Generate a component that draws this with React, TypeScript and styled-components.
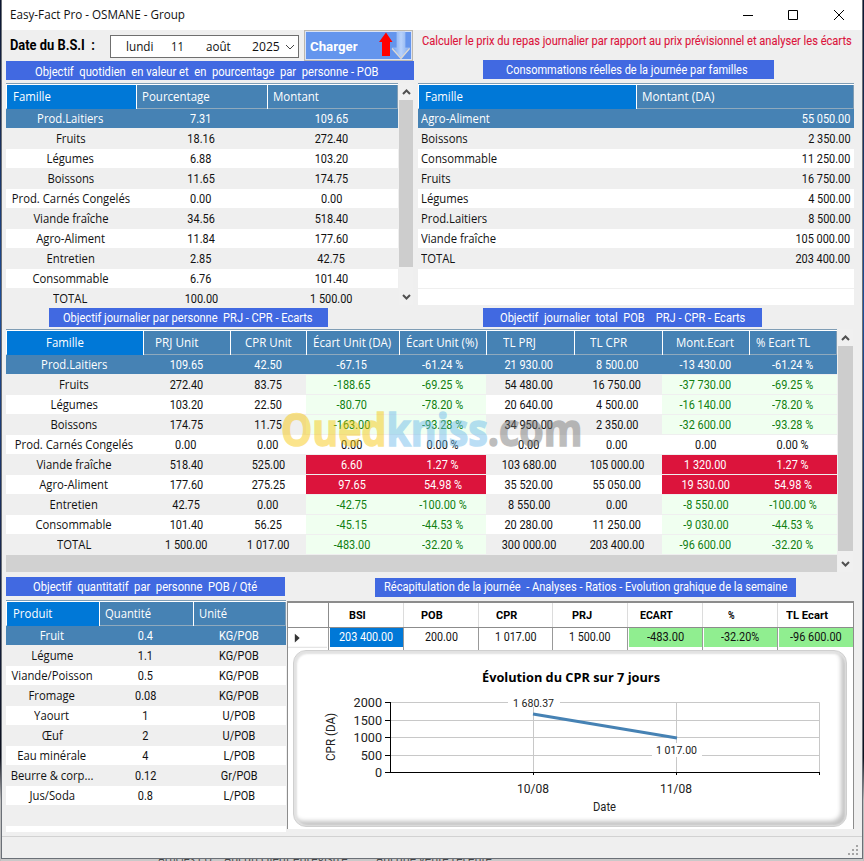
import React, { useLayoutEffect, useRef, useState } from 'react';
import styled, { createGlobalStyle, css } from 'styled-components';

const UI = '"Open Sans", "Noto Sans", sans-serif';
const NUM = 'Roboto, "Liberation Sans", sans-serif';

const GlobalStyle = createGlobalStyle`
  * { box-sizing: border-box; }
  body { margin: 0; background: #cfcfcf; overflow: hidden; font: 12px/18px ${UI}; color: #111; }
`;

/* ---------- text that is squeezed to a given width ---------- */

const FitBox = styled.span<{ $w: number }>`
  display: block;
  flex: none;
  width: ${p => p.$w}px;
  white-space: pre;
  text-align: left;
`;
const FitText = styled.span`
  display: inline-block;
  transform-origin: 0 50%;
`;

function Fit({ w, children }: { w: number; children: React.ReactNode }) {
  const ref = useRef<HTMLSpanElement>(null);
  const [scale, setScale] = useState(1);
  useLayoutEffect(() => {
    if (ref.current) setScale(w / ref.current.offsetWidth);
  }, [w]);
  return (
    <FitBox $w={w}>
      <FitText ref={ref} style={{ transform: `scaleX(${scale})` }}>{children}</FitText>
    </FitBox>
  );
}

/* ---------- window frame ---------- */

const Desktop = styled.div`
  width: 864px;
  height: 861px;
  padding: 0 1px 0 1px;
  background: linear-gradient(#0b1530, #18294f 12%, #1d4f9c 36%, #1a2c58 60%, #0b0f1c 88%, #bdbdbd 93%);
  overflow: hidden;
`;
const Window = styled.div`
  position: relative;
  width: 862px;
  height: 859px;
  border: solid #6b7077;
  border-width: 0 1px 1px;
  background: #efefef;
  display: flex;
  flex-direction: column;
`;
const TitleBar = styled.header`
  height: 30px;
  flex: none;
  background: #fff;
  padding-left: 8px;
  display: flex;
  align-items: center;
`;
const Controls = styled.svg`
  margin: -1px 15px 0 auto;
  width: 106px;
  height: 14px;
  fill: none;
  stroke: #000;
`;
const Body = styled.main`
  padding: 0 7px 0 4px;
  height: 806px;
  flex: none;
  display: flex;
  flex-direction: column;
`;
const StatusBar = styled.footer`
  flex: 1;
  border-top: 1px solid #d2d2d2;
  display: flex;
  justify-content: flex-end;
  align-items: flex-end;
  padding: 0 3px 2px 0;
`;
const Behind = styled.div`
  height: 2px;
  background: #c9c9c9;
  display: flex;
  gap: 12px;
  padding-left: 157px;
  overflow: hidden;
  line-height: 0;
  color: #444;
`;

/* ---------- top area ---------- */

const TopRow = styled.section`
  display: flex;
  gap: 5px;
  height: 278px;
`;
const LeftCol = styled.div`
  width: 407px;
`;
const RightCol = styled.div`
  width: 436px;
`;
const Toolbar = styled.div`
  height: 31px;
  display: flex;
  padding-left: 4px;
`;
const DateLabel = styled.div`
  width: 100px;
  font: 700 15px/31px ${NUM};
  color: #000;
`;
const DateField = styled.div`
  width: 190px;
  height: 23px;
  margin-top: 5px;
  border: 1px solid #6f6f6f;
  background: #fff;
  display: flex;
  align-items: center;
  padding: 0 3px 0 15px;
  font-size: 13px;
  line-height: 21px;
`;
const Gap = styled.i<{ $w: number }>`
  flex: none;
  width: ${p => p.$w}px;
`;
const LoadButton = styled.button`
  margin: 0 0 0 5px;
  padding: 2px 0 0 5px;
  width: 109px;
  flex: none;
  height: 31px;
  border: 1px solid #bdb8ae;
  box-shadow: inset 0 0 0 1px #d9e2f5;
  background: #6495ed;
  color: #fff;
  display: flex;
  align-items: center;
  font: 700 13px/28px ${NUM};
`;
const Arrows = styled.svg`
  width: 32px;
  height: 29px;
  margin: -2px 0 0 20px;
`;
const Notice = styled.div`
  height: 30px;
  padding: 2px 0 0 4px;
  font: 12px/18px ${NUM};
  color: #dc143c;
  -webkit-text-stroke: 0.1px #dc143c;
`;
const Banner = styled.div<{ $w: number; $ml?: number; $mt?: number; $pad: number; $lh?: number }>`
  flex: none;
  width: ${p => p.$w}px;
  height: 19px;
  margin: ${p => p.$mt || 0}px 0 0 ${p => p.$ml || 0}px;
  padding-left: ${p => p.$pad}px;
  background: #4169e1;
  color: #fff;
  font: 12.5px/${p => p.$lh || 20}px ${NUM};
`;

/* ---------- data grids ---------- */

const GridWrap = styled.div<{ $mt?: number; $h: number }>`
  display: flex;
  margin-top: ${p => p.$mt || 0}px;
  height: ${p => p.$h}px;
  overflow: hidden;
`;
const Table = styled.div<{ $w: number }>`
  width: ${p => p.$w}px;
  flex: none;
  background: #fff;
  border-top: 1px solid #7f9db5;
  padding-top: 1px;
  overflow: hidden;
`;
const HeadRow = styled.div<{ $cols: string }>`
  display: grid;
  grid-template-columns: ${p => p.$cols};
  height: 24px;
  background: #4682b4;
  border-bottom: 1px solid #8fa9bd;
  border-left: 1px solid #fff;
`;
const HeadCell = styled.div<{ $pad: number; $active?: boolean }>`
  padding-left: ${p => p.$pad}px;
  color: #fff;
  line-height: 24px;
  background: ${p => (p.$active ? '#0078d7' : 'transparent')};
  border-left: ${p => (p.$active ? '0' : '1px solid #fff')};
  &:last-child { border-right: 1px solid #7f9db5; }
`;
const Row = styled.div<{ $cols: string; $alt?: boolean; $sel?: boolean }>`
  display: grid;
  grid-template-columns: ${p => p.$cols};
  height: 20px;
  background: ${p => (p.$sel ? '#4682b4' : p.$alt ? '#efefef' : '#fff')};
  color: ${p => (p.$sel ? '#fff' : '#111')};
  padding-left: 1px;
  border-bottom: 1px solid #efefef;
`;
type Tone = 'good' | 'bad' | undefined;
const Cell = styled.div<{ $align?: string; $num?: boolean; $tone?: Tone; $dx?: number }>`
  height: 19px;
  text-align: ${p => p.$align || 'center'};
  padding: 0 ${p => (p.$dx && p.$dx < 0 ? -2 * p.$dx : 0)}px 0 ${p => (p.$dx && p.$dx > 0 ? 2 * p.$dx : 0)}px;
  white-space: nowrap;
  line-height: 20px;
  ${p => p.$num && css`font-family: ${NUM}; line-height: 21px;`}
  ${p => p.$tone === 'good' && css`background: #f0fff0; color: #128012;`}
  ${p => p.$tone === 'bad' && css`background: #dc143c; color: #fff;`}
`;
const Squeeze = styled.span<{ $k: number; $origin?: string }>`
  display: inline-block;
  transform: scaleX(${p => p.$k});
  transform-origin: ${p => p.$origin || '50%'} 50%;
`;
const Filler = styled.div`
  height: 17px;
  background: #d1d1d1;
`;

const ScrollTrack = styled.div<{ $w: number }>`
  width: ${p => p.$w}px;
  margin-left: 1px;
  display: flex;
  flex-direction: column;
  background: #f0f0f0;
`;
const Thumb = styled.div`
  flex: 1;
  background: #cdcdcd;
`;
const ArrowSvg = styled.svg<{ $h: number }>`
  width: 15px;
  height: ${p => p.$h}px;
  flex: none;
  fill: none;
  stroke: #505050;
  stroke-width: 2;
`;

function Scroll({ w, top, bottom }: { w: number; top: number; bottom: number }) {
  return (
    <ScrollTrack $w={w}>
      <ArrowSvg $h={top} viewBox={`0 0 15 ${top}`}><path d="M4 11l3.5-3.5L11 11" /></ArrowSvg>
      <Thumb />
      <ArrowSvg $h={bottom} viewBox={`0 0 15 ${bottom}`}><path d={`M4 ${bottom - 10}l3.5 3.5 3.5-3.5`} /></ArrowSvg>
    </ScrollTrack>
  );
}

type Head = { t: string; w: number; pad: number };
type GridProps = {
  w: number;
  cols: string;
  heads: Head[];
  rows: string[][];
  shift?: number[];
  left?: boolean;
  textCols?: number[];
  tones?: number[];
};

const toneOf = (v: string, r: number, c: number, tones?: number[]): Tone => {
  if (!tones || r === 0 || !tones.includes(c)) return undefined;
  if (v.startsWith('-')) return 'good';
  return v.startsWith('0.00') ? undefined : 'bad';
};

function Grid({ w, cols, heads, rows, shift = [], left, textCols = [0], tones }: GridProps) {
  return (
    <Table $w={w}>
      <HeadRow $cols={cols}>
        {heads.map((h, i) => (
          <HeadCell key={i} $pad={h.pad} $active={i === 0}><Fit w={h.w}>{h.t}</Fit></HeadCell>
        ))}
      </HeadRow>
      {rows.map((r, ri) => (
        <Row key={ri} $cols={cols} $alt={ri % 2 === 1} $sel={ri === 0}>
          {r.map((v, ci) => {
            const text = textCols.includes(ci);
            const align = left ? (ci ? 'right' : 'left') : 'center';
            return (
              <Cell key={ci} $align={align} $num={!text} $dx={shift[ci]} $tone={toneOf(v, ri, ci, tones)}>
                <Squeeze $k={text ? 0.94 : 0.91} $origin={left ? (ci ? '100%' : '0') : '50%'}>{v}</Squeeze>
              </Cell>
            );
          })}
        </Row>
      ))}
    </Table>
  );
}

const quota = [
  ['Prod.Laitiers', '7.31', '109.65'],
  ['Fruits', '18.16', '272.40'],
  ['Légumes', '6.88', '103.20'],
  ['Boissons', '11.65', '174.75'],
  ['Prod. Carnés Congelés', '0.00', '0.00'],
  ['Viande fraîche', '34.56', '518.40'],
  ['Agro-Aliment', '11.84', '177.60'],
  ['Entretien', '2.85', '42.75'],
  ['Consommable', '6.76', '101.40'],
  ['TOTAL', '100.00', '1 500.00'],
];
const actual = [
  ['Agro-Aliment', '55 050.00'],
  ['Boissons', '2 350.00'],
  ['Consommable', '11 250.00'],
  ['Fruits', '16 750.00'],
  ['Légumes', '4 500.00'],
  ['Prod.Laitiers', '8 500.00'],
  ['Viande fraîche', '105 000.00'],
  ['TOTAL', '203 400.00'],
  ['', ''],
];
const gaps = [
  ['Prod.Laitiers', '109.65', '42.50', '-67.15', '-61.24 %', '21 930.00', '8 500.00', '-13 430.00', '-61.24 %'],
  ['Fruits', '272.40', '83.75', '-188.65', '-69.25 %', '54 480.00', '16 750.00', '-37 730.00', '-69.25 %'],
  ['Légumes', '103.20', '22.50', '-80.70', '-78.20 %', '20 640.00', '4 500.00', '-16 140.00', '-78.20 %'],
  ['Boissons', '174.75', '11.75', '-163.00', '-93.28 %', '34 950.00', '2 350.00', '-32 600.00', '-93.28 %'],
  ['Prod. Carnés Congelés', '0.00', '0.00', '0.00', '0.00 %', '0.00', '0.00', '0.00', '0.00 %'],
  ['Viande fraîche', '518.40', '525.00', '6.60', '1.27 %', '103 680.00', '105 000.00', '1 320.00', '1.27 %'],
  ['Agro-Aliment', '177.60', '275.25', '97.65', '54.98 %', '35 520.00', '55 050.00', '19 530.00', '54.98 %'],
  ['Entretien', '42.75', '0.00', '-42.75', '-100.00 %', '8 550.00', '0.00', '-8 550.00', '-100.00 %'],
  ['Consommable', '101.40', '56.25', '-45.15', '-44.53 %', '20 280.00', '11 250.00', '-9 030.00', '-44.53 %'],
  ['TOTAL', '1 500.00', '1 017.00', '-483.00', '-32.20 %', '300 000.00', '203 400.00', '-96 600.00', '-32.20 %'],
];
const portions = [
  ['Fruit', '0.4', 'KG/POB'],
  ['Légume', '1.1', 'KG/POB'],
  ['Viande/Poisson', '0.5', 'KG/POB'],
  ['Fromage', '0.08', 'KG/POB'],
  ['Yaourt', '1', 'U/POB'],
  ['Œuf', '2', 'U/POB'],
  ['Eau minérale', '4', 'L/POB'],
  ['Beurre & corp...', '0.12', 'Gr/POB'],
  ['Jus/Soda', '0.8', 'L/POB'],
  ['', '', ''],
];

/* ---------- middle area ---------- */

const BannerRow = styled.div`
  display: flex;
  height: 21px;
`;
const Watermark = styled.div`
  position: absolute;
  left: 279px;
  top: 399px;
  font: 700 45px/60px ${UI};
  opacity: 0.45;
  pointer-events: none;
`;
const Tint = styled.span<{ $c: string }>`
  color: ${p => p.$c};
  -webkit-text-stroke: 1.5px ${p => p.$c};
`;

/* ---------- bottom area ---------- */

const BottomRow = styled.section`
  display: flex;
  height: 255px;
  margin-top: 5px;
`;
const RecapCol = styled.div`
  width: 567px;
  margin-left: 1px;
`;
const Recap = styled.div`
  margin-top: 4px;
  height: 228px;
  background: #fff;
  border: 1px solid #8c8c8c;
  border-top-width: 2px;
  border-bottom: 0;
`;
const recapCols = '41px 75px 75px 74px 75px 75px 75px 1fr';
const RecapHead = styled.div`
  display: grid;
  grid-template-columns: ${recapCols};
  height: 25px;
  border-bottom: 1px solid #8c8c8c;
  font: 700 11.5px/24px ${NUM};
  color: #000;
`;
const RecapHeadCell = styled.div<{ $pad: number; $dark?: boolean }>`
  padding-left: ${p => p.$pad}px;
  border-right: 1px solid ${p => (p.$dark ? '#8c8c8c' : '#dcdcdc')};
  &:last-child { border-right: 0; }
`;
const RecapRow = styled.div`
  display: grid;
  grid-template-columns: ${recapCols};
  height: 22px;
  font: 12px/18px ${NUM};
`;
const RecapCell = styled.div<{ $bg?: string; $fg?: string }>`
  border-right: 1px solid #999;
  text-align: center;
  color: ${p => p.$fg || '#111'};
  background: linear-gradient(${p => p.$bg || '#fff'}, ${p => p.$bg || '#fff'}) 1px 0 / calc(100% - 1px) 19px no-repeat;
  &:last-child { border-right: 0; }
`;
const Marker = styled.svg`
  width: 41px;
  height: 22px;
  border-right: 1px solid #999;
`;
const ChartCard = styled.div`
  width: 554px;
  height: 177px;
  margin: 0 0 0 5px;
  border-radius: 13px;
  background: #fff;
  border: 1px solid #cfcfcf;
  box-shadow: inset 1px 1px 2px 2px #e2e2e2, inset -3px -3px 4px 2px #c4c4c4;
`;
const Chart = styled.svg`
  display: block;
  width: 552px;
  height: 175px;
`;

const recapHeads: [string, number, number][] = [
  ['BSI', 20, 17], ['POB', 17, 22], ['CPR', 17, 21], ['PRJ', 19, 20],
  ['ECART', 12, 33], ['%', 25, 7], ['TL Ecart', 8, 42],
];
const recapCells: [string, number, string?, string?][] = [
  ['203 400.00', 54, '#0078d7', '#fff'], ['200.00', 33], ['1 017.00', 42], ['1 500.00', 42],
  ['-483.00', 37, '#90ee90'], ['-32.20%', 38, '#90ee90'], ['-96 600.00', 52, '#90ee90'],
];
const Center = styled.div`
  display: flex;
  justify-content: center;
`;

/* Chart coordinates are offset from the card's inner corner */
const yTicks: [number, number][] = [[2000, 51], [1500, 69], [1000, 86], [500, 104], [0, 121]];

function CprChart() {
  return (
    <Chart viewBox="0 0 552 175" fontFamily='Roboto, "Liberation Sans", sans-serif' fill="#000">
      <text x="188" y="30.5" fontFamily='"Open Sans", sans-serif' fontWeight="700" fontSize="12.5" textLength="178" lengthAdjust="spacingAndGlyphs">Évolution du CPR sur 7 jours</text>
      <g stroke="#c8c8c8" fill="none">
        <path d="M96 51.500H525.500V121M96 69.500H525.500M96 86.500H525.500M96 104.500H525.500M239.500 51V121M382.500 51V121" />
      </g>
      <path d="M214 46h52v10h-52zM358 92h50v14h-50z" fill="#fff" />
      <g stroke="#000" fill="none">
        <path d="M96.500 51V122M91 51.500h6M91 69.500h6M91 86.500h6M91 104.500h6M91 121.500H526M239.500 121v3M382.500 121v3M525.500 121v3" />
      </g>
      {yTicks.map(([v, y]) => (
        <text key={v} x={88} y={y + 5} fontSize="13.5" textAnchor="end" textLength={String(v).length * 7.1} lengthAdjust="spacingAndGlyphs" fill="#222">{v}</text>
      ))}
      <text x="219" y="56" fontSize="11.500" fill="#222" textLength="41" lengthAdjust="spacingAndGlyphs">1 680.37</text>
      <text x="362" y="103" fontSize="11.500" fill="#222" textLength="41" lengthAdjust="spacingAndGlyphs">1 017.00</text>
      <path d="M239 63L383 87" stroke="#4682b4" strokeWidth="3" />
      <text x="223" y="142" fontSize="13.500" fill="#222" textLength="32" lengthAdjust="spacingAndGlyphs">10/08</text>
      <text x="366" y="142" fontSize="13.500" fill="#222" textLength="32" lengthAdjust="spacingAndGlyphs">11/08</text>
      <text x="299" y="160" fontSize="12" fill="#222" textLength="23" lengthAdjust="spacingAndGlyphs">Date</text>
      <text transform="translate(41 110) rotate(-90)" fontSize="12" fill="#222" textLength="48" lengthAdjust="spacingAndGlyphs">CPR (DA)</text>
    </Chart>
  );
}

export default function App() {
  return (
    <Desktop>
      <GlobalStyle />
      <Window>
        <TitleBar>
          <Fit w={175}>Easy-Fact Pro - OSMANE - Group</Fit>
          <Controls viewBox="0 0 106 14">
            <path d="M2 7.500h10M47.500 2.500h9v9h-9zM93 2l10 10M103 2L93 12" />
          </Controls>
        </TitleBar>
        <Body>
          <TopRow>
            <LeftCol>
              <Toolbar>
                <DateLabel><Fit w={85}>Date du B.S.I  :</Fit></DateLabel>
                <DateField>
                  <Fit w={27}>lundi</Fit><Gap $w={18} />
                  <Fit w={13}>11</Fit><Gap $w={22} />
                  <Fit w={25}>août</Fit><Gap $w={21} />
                  <Fit w={28}>2025</Fit><Gap $w={5} />
                  <svg width="10" height="8" viewBox="0 0 10 8" fill="none" stroke="#444"><path d="M1 2l4 4 4-4" /></svg>
                </DateField>
                <LoadButton>
                  <Fit w={48}>Charger</Fit>
                  <Arrows viewBox="0 0 32 29">
                    <defs>
                      <linearGradient id="down" x1="0" x2="1">
                        <stop offset="0" stopColor="#6a9df0" />
                        <stop offset="0.5" stopColor="#b9d2fa" />
                        <stop offset="1" stopColor="#7aa6ee" />
                      </linearGradient>
                    </defs>
                    <path d="M8 1.500L14.500 11H12v14H4V11H1z" fill="#f00" />
                    <path d="M19 1h8v16h5l-8.500 10L14 17h5z" fill="url(#down)" stroke="#a5c3f5" strokeWidth="0.7" />
                    <path d="M14 17.500L23 27.500 31.500 17.500" fill="none" stroke="#dcd8d0" strokeWidth="1.200" />
                  </Arrows>
                </LoadButton>
              </Toolbar>
              <Banner $w={408} $pad={29} $lh={22}><Fit w={344}>Objectif  quotidien  en valeur et  en  pourcentage  par  personne - POB</Fit></Banner>
              <GridWrap $mt={3} $h={222}>
                <Grid
                  w={392}
                  cols="129px 131px 131px"
                  heads={[{ t: 'Famille', w: 38, pad: 6 }, { t: 'Pourcentage', w: 68, pad: 5 }, { t: 'Montant', w: 46, pad: 5 }]}
                  rows={quota}
                  shift={[-1, -0.5, -1]}
                />
                <Scroll w={15} top={17} bottom={38} />
              </GridWrap>
            </LeftCol>
            <RightCol>
              <Notice><Fit w={430}>Calculer le prix du repas journalier par rapport au prix prévisionnel et analyser les écarts</Fit></Notice>
              <Banner $w={291} $ml={65} $pad={23}><Fit w={242}>Consommations réelles de la journée par familles</Fit></Banner>
              <GridWrap $mt={4} $h={222}>
                <Grid
                  w={436}
                  cols="217px 218px"
                  left
                  heads={[{ t: 'Famille', w: 38, pad: 6 }, { t: 'Montant (DA)', w: 72, pad: 5 }]}
                  rows={actual}
                  shift={[1, -1.75]}
                />
              </GridWrap>
            </RightCol>
          </TopRow>
          <BannerRow>
            <Banner $w={279} $ml={43} $pad={14}><Fit w={250}>Objectif journalier par personne  PRJ - CPR - Ecarts</Fit></Banner>
            <Banner $w={279} $ml={155} $pad={17}><Fit w={245}>Objectif  journalier  total  POB    PRJ - CPR - Ecarts</Fit></Banner>
          </BannerRow>
          <GridWrap $h={243}>
            <div>
              <Grid
                w={831}
                cols="136px 87px 76px 93px 87px 88px 88px 87px 88px"
                heads={[
                  { t: 'Famille', w: 38, pad: 39 }, { t: 'PRJ Unit', w: 43, pad: 11 }, { t: 'CPR Unit', w: 47, pad: 14 },
                  { t: 'Écart Unit (DA)', w: 78, pad: 6 }, { t: 'Écart Unit (%)', w: 72, pad: 6 }, { t: 'TL PRJ', w: 33, pad: 16 },
                  { t: 'TL CPR', w: 37, pad: 15 }, { t: 'Mont.Ecart', w: 58, pad: 13 }, { t: '% Ecart TL', w: 54, pad: 6 },
                ]}
                rows={gaps}
                shift={[-1, -0.5, 0, -0.5, 0, -1, -1, 0, 0]}
                tones={[3, 4, 7, 8]}
              />
              <Filler />
            </div>
            <Scroll w={15} top={17} bottom={21} />
          </GridWrap>
          <BottomRow>
            <div>
              <Banner $w={279} $pad={27}><Fit w={224}>Objectif  quantitatif  par  personne  POB / Qté</Fit></Banner>
              <GridWrap $mt={4} $h={232}>
                <Grid
                  w={280}
                  cols="92px 94px 93px"
                  heads={[{ t: 'Produit', w: 39, pad: 6 }, { t: 'Quantité', w: 46, pad: 5 }, { t: 'Unité', w: 28, pad: 5 }]}
                  rows={portions}
                  shift={[-1, -0.5, -0.5]}
                />
              </GridWrap>
            </div>
            <RecapCol>
              <Banner $w={421} $ml={88} $mt={1} $pad={9} $lh={17}><Fit w={403}>Récapitulation de la journée  - Analyses - Ratios - Evolution grahique de la semaine</Fit></Banner>
              <Recap>
                <RecapHead>
                  <RecapHeadCell $pad={0} $dark />
                  {recapHeads.map(([t, pad, w]) => (
                    <RecapHeadCell key={t} $pad={pad}><Fit w={w}>{t}</Fit></RecapHeadCell>
                  ))}
                </RecapHead>
                <RecapRow>
                  <Marker viewBox="0 0 41 22"><path d="M7 5.500v9l5-4.500z" fill="#333" /><path d="M0 19.500h40" stroke="#ddd" /></Marker>
                  {recapCells.map(([t, w, bg, fg]) => (
                    <RecapCell key={t} $bg={bg} $fg={fg}><Center><Fit w={w}>{t}</Fit></Center></RecapCell>
                  ))}
                </RecapRow>
                <ChartCard><CprChart /></ChartCard>
              </Recap>
            </RecapCol>
          </BottomRow>
        </Body>
        <StatusBar>
          <svg width="11" height="11" viewBox="0 0 11 11" fill="#a5a5a5">
            <path d="M8 0h2v2H8zM4 4h2v2H4zM8 4h2v2H8zM0 8h2v2H0zM4 8h2v2H4zM8 8h2v2H8z" />
          </svg>
        </StatusBar>
        <Watermark>
          <Fit w={301}><Tint $c="#f7c400">Oued</Tint><Tint $c="#67b8ea">kniss</Tint><Tint $c="#6e6e6e">.com</Tint></Fit>
        </Watermark>
      </Window>
      <Behind>
        <Fit w={54}>Articles PU</Fit><Fit w={124}>Aucun client enregistré</Fit><Gap $w={4} /><Fit w={116}>Aucune vente récente</Fit>
      </Behind>
    </Desktop>
  );
}
